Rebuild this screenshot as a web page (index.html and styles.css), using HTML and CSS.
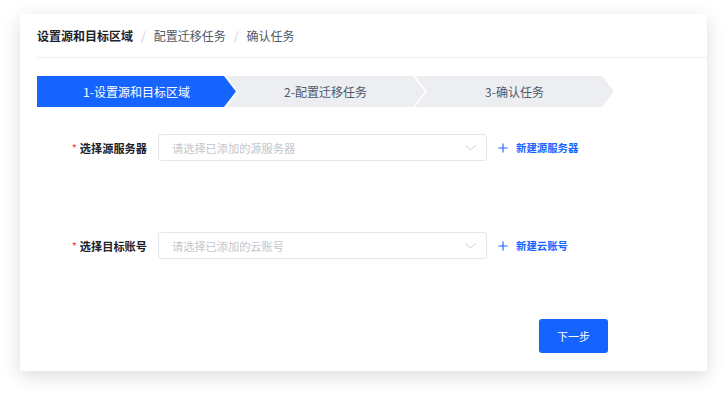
FILE: index.html
```html
<!DOCTYPE html>
<html lang="zh-CN">

<head>
  <meta charset="UTF-8">
  <meta name="viewport" content="width=device-width, initial-scale=1.0">
  <title>迁移任务</title>
  <link rel="stylesheet" href="styles.css">
</head>

<body>
  <div class="page">
    <div class="card">
      <div class="crumbs">
        <span class="crumb current">设置源和目标区域</span>
        <span class="sep">/</span>
        <span class="crumb">配置迁移任务</span>
        <span class="sep">/</span>
        <span class="crumb">确认任务</span>
      </div>

      <div class="steps">
        <div class="step first active">1-设置源和目标区域</div>
        <div class="step">2-配置迁移任务</div>
        <div class="step">3-确认任务</div>
      </div>

      <div class="form">
        <div class="row">
          <label class="label"><span class="req">*</span>选择源服务器</label>
          <div class="select">
            <span class="placeholder">请选择已添加的源服务器</span>
            <svg class="arrow" width="11" height="6" viewBox="0 0 11 6"><path d="M0.5 0.5 L5.5 5 L10.5 0.5" fill="none" stroke="#c9cdd4" stroke-width="1"/></svg>
          </div>
          <a class="link" href="#">
            <svg width="10" height="10" viewBox="0 0 10 10"><path d="M5 0.5 V9.5 M0.5 5 H9.5" stroke="#1664ff" stroke-width="1.1"/></svg>
            <span>新建源服务器</span>
          </a>
        </div>

        <div class="row second">
          <label class="label"><span class="req">*</span>选择目标账号</label>
          <div class="select">
            <span class="placeholder">请选择已添加的云账号</span>
            <svg class="arrow" width="11" height="6" viewBox="0 0 11 6"><path d="M0.5 0.5 L5.5 5 L10.5 0.5" fill="none" stroke="#c9cdd4" stroke-width="1"/></svg>
          </div>
          <a class="link" href="#">
            <svg width="10" height="10" viewBox="0 0 10 10"><path d="M5 0.5 V9.5 M0.5 5 H9.5" stroke="#1664ff" stroke-width="1.1"/></svg>
            <span>新建云账号</span>
          </a>
        </div>
      </div>

      <div class="actions">
        <button type="button" class="next">下一步</button>
      </div>
    </div>
  </div>
</body>

</html>
```

FILE: styles.css
```css
body {
  margin: 0;
  background-color: #fff;
  font-family: "Noto Sans CJK SC", "Noto Sans", sans-serif;
  color: #1d2129;
}

.page {
  padding: 14px 20px 25px 20px;
}

.card {
  width: 670px;
  height: 357px;
  padding-left: 17px;
  background-color: #fff;
  box-shadow: 0 5px 18px rgba(0, 0, 0, 0.14);
}

.crumbs {
  display: flex;
  align-items: center;
  height: 43px;
  border-bottom: 1px solid #eef0f3;
  font-size: 12px;
}

.crumb {
  color: #4e5969;
}

.crumb.current {
  color: #1d2129;
  font-weight: bold;
}

.sep {
  color: #c9cdd4;
  margin: 0 8px;
}

.steps {
  display: flex;
  margin-top: 18px;
  height: 31px;
}

.step {
  width: 199px;
  flex-shrink: 0;
  margin-left: -10px;
  display: flex;
  align-items: center;
  justify-content: center;
  background-color: #eceef2;
  color: #4e5969;
  font-size: 12px;
  clip-path: polygon(0 0, calc(100% - 12px) 0, 100% 50%, calc(100% - 12px) 100%, 0 100%, 12px 50%);
}

.step.first {
  margin-left: 0;
  clip-path: polygon(0 0, calc(100% - 12px) 0, 100% 50%, calc(100% - 12px) 100%, 0 100%);
}

.step.active {
  background-color: #1664ff;
  color: #fff;
}

.form {
  margin-top: 27px;
}

.row {
  display: flex;
  align-items: center;
  height: 27px;
}

.row.second {
  margin-top: 71px;
}

.label {
  width: 121px;
  flex-shrink: 0;
  padding-right: 11px;
  box-sizing: border-box;
  text-align: right;
  font-size: 11.2px;
  font-weight: bold;
  color: #1d2129;
}

.req {
  color: #f53f3f;
  font-weight: normal;
  margin-right: 3px;
}

.select {
  width: 329px;
  height: 27px;
  box-sizing: border-box;
  border: 1px solid #e5e6eb;
  border-radius: 3px;
  display: flex;
  align-items: center;
  justify-content: space-between;
  padding: 0 10px 0 13px;
}

.placeholder {
  font-size: 11.2px;
  color: #c2c6cd;
}

.link {
  display: flex;
  align-items: center;
  margin-left: 11px;
  color: #1664ff;
  text-decoration: none;
  font-size: 10.4px;
  font-weight: bold;
}

.link svg {
  margin-right: 8px;
}

.actions {
  margin-top: 60px;
  padding-left: 502px;
}

.next {
  width: 69px;
  height: 34px;
  border: none;
  border-radius: 3px;
  background-color: #1664ff;
  color: #fff;
  font-family: "Noto Sans CJK SC", "Noto Sans", sans-serif;
  font-size: 11px;
  cursor: pointer;
}
```
